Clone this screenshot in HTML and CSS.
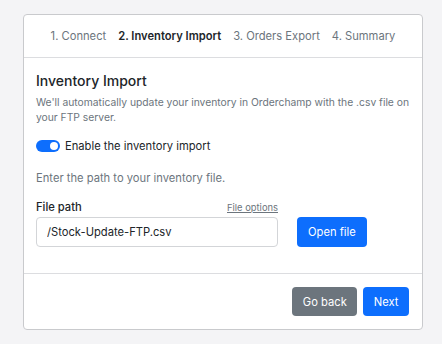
FILE: index.html
```html
<!DOCTYPE html>
<html lang="en">
<head>
    <meta charset="UTF-8">
    <meta name="viewport" content="width=device-width, initial-scale=1.0">
    <title>FTP Integration</title>
    <link rel="stylesheet" href="styles.css">
</head>
<body>

    <div class="card">
        <div class="card-header">
            <span class="step">1. Connect</span>
            <span class="step active">2. Inventory Import</span>
            <span class="step">3. Orders Export</span>
            <span class="step">4. Summary</span>
        </div>

        <div class="card-body">
            <h2>Inventory Import</h2>
            <p class="lead">We'll automatically update your inventory in Orderchamp with the .csv file on your FTP server.</p>

            <label class="switch">
                <input type="checkbox" checked>
                <span class="slider"></span>
                Enable the inventory import
            </label>

            <p class="hint">Enter the path to your inventory file.</p>

            <div class="file-row">
                <div class="field">
                    <div class="field-head">
                        <label for="filePath">File path</label>
                        <a href="#" class="options">File options</a>
                    </div>
                    <input type="text" id="filePath" value="/Stock-Update-FTP.csv">
                </div>
                <button class="btn btn-primary">Open file</button>
            </div>
        </div>

        <div class="card-footer">
            <button class="btn btn-secondary">Go back</button>
            <button class="btn btn-primary">Next</button>
        </div>
    </div>

</body>
</html>
```

FILE: styles.css
```css
body {
    font-family: Inter, "Open Sans", Arial, sans-serif;
    font-size: 11.2px;
    background-color: #f4f4f6;
    color: #212529;
    margin: 0;
    padding: 14px 0 0 23px;
}

.card {
    width: 400px;
    box-sizing: border-box;
    background-color: #fff;
    border: 1px solid #c9cacd;
    border-radius: 4px;
}

.card-header {
    display: flex;
    justify-content: center;
    gap: 12px;
    height: 42px;
    align-items: center;
    border-bottom: 1px solid #dcdde0;
    color: #6c757d;
}

.step.active {
    color: #212529;
    font-weight: 600;
}

.card-body {
    padding: 14px 5px 0 12px;
    height: 201px;
    border-bottom: 1px solid #dcdde0;
}

h2 {
    font-size: 14px;
    font-weight: 500;
    margin: 0 0 6px;
}

.lead {
    font-size: 10.3px;
    line-height: 15px;
    color: #6c757d;
    margin: 0 0 14px;
}

.switch {
    display: flex;
    align-items: center;
    gap: 5px;
}

.switch input {
    display: none;
}

.slider {
    width: 24px;
    height: 12px;
    border-radius: 6px;
    background-color: #0d6efd;
    position: relative;
}

.slider::after {
    content: "";
    position: absolute;
    right: 2px;
    top: 2px;
    width: 8px;
    height: 8px;
    border-radius: 50%;
    background-color: #fff;
}

.hint {
    color: #6c757d;
    margin: 18px 0 15px;
}

.file-row {
    display: flex;
    align-items: flex-end;
    gap: 19px;
}

.field {
    width: 242px;
}

.field-head {
    display: flex;
    justify-content: space-between;
    align-items: baseline;
    margin-bottom: 3px;
}

.field-head label {
    font-weight: 500;
}

.options {
    font-size: 9.4px;
    color: #6c757d;
}

.field input {
    width: 100%;
    box-sizing: border-box;
    height: 30px;
    padding: 0 10px;
    font-family: inherit;
    font-size: 11.2px;
    color: #212529;
    border: 1px solid #d3d5d8;
    border-radius: 4px;
}

.btn {
    height: 29px;
    padding: 0 10.5px;
    font-family: inherit;
    font-size: 11.2px;
    border: none;
    border-radius: 4px;
    color: #fff;
    cursor: pointer;
}

.file-row .btn {
    height: 30px;
    padding: 0 11px;
}

.btn-primary {
    background-color: #0d6efd;
}

.btn-secondary {
    background-color: #6c757d;
}

.card-footer {
    display: flex;
    justify-content: flex-end;
    gap: 6px;
    padding: 13px 13px 13px;
}
```
